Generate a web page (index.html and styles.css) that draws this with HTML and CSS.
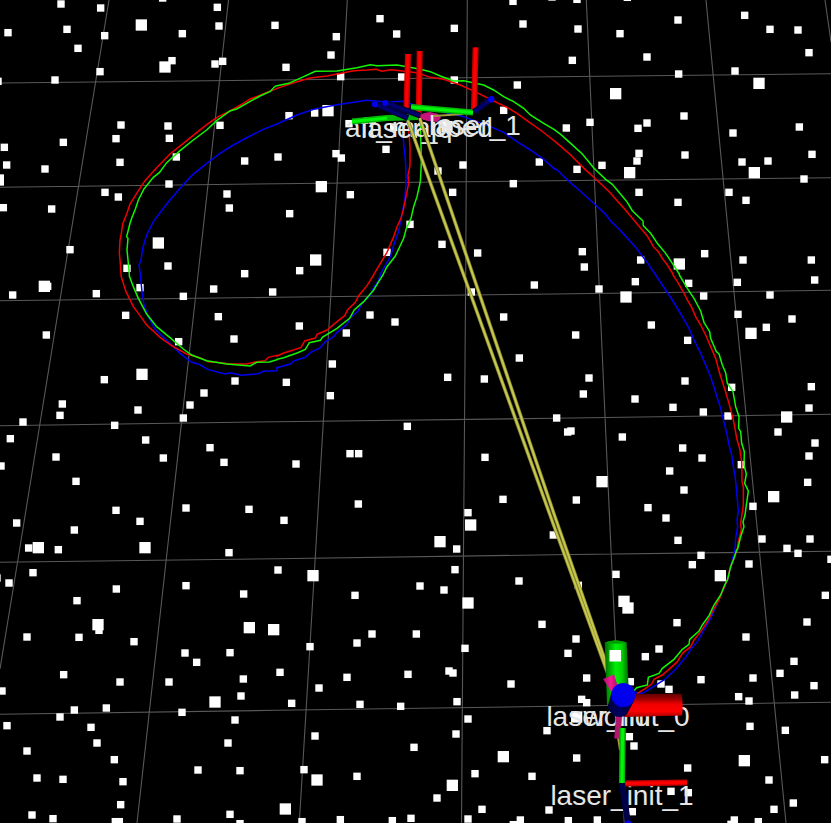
FILE: index.html
```html
<!DOCTYPE html>
<html lang="en">
<head>
<meta charset="utf-8">
<title>Laser mapping view</title>
<link rel="stylesheet" href="styles.css">
</head>
<body>
<main class="view">
<svg class="scene" viewBox="0 0 831 823" role="img" aria-label="Point cloud with trajectories and coordinate frames">
  <defs>
    <linearGradient id="greenTube"><stop offset="0" stop-color="#006400"/><stop offset=".15" stop-color="#009a00"/><stop offset=".45" stop-color="#00ee08"/><stop offset=".7" stop-color="#00d800"/><stop offset=".88" stop-color="#009000"/><stop offset="1" stop-color="#005c00"/></linearGradient>
    <linearGradient id="redTube" x2="0" y2="1"><stop offset="0" stop-color="#600000"/><stop offset=".22" stop-color="#9a0000"/><stop offset=".45" stop-color="#f00000"/><stop offset=".75" stop-color="#ff0000"/><stop offset="1" stop-color="#a80000"/></linearGradient>
    <linearGradient id="navyTube"><stop offset="0" stop-color="#000038"/><stop offset=".45" stop-color="#000060"/><stop offset="1" stop-color="#000030"/></linearGradient>
    <linearGradient id="pinkCone"><stop offset="0" stop-color="#a80e62"/><stop offset=".5" stop-color="#f01c92"/><stop offset="1" stop-color="#b01068"/></linearGradient>
  </defs>
  <path class="grid" d="M0 83 277 80 554 76.7 831 73.7M0 187.3 277 183.7 554 180.7 831 177.7M0 300.7 277 297.3 554 294 831 290.3M0 425.7 277 421.7 554 418.3 831 414.3M0 562.3 277 558.7 554 554.8 831 551.3M0 714.3 277 710.3 554 706.3 831 702.3M109 0 64 275 19.5 550 0 669M228.5 0 198 275 167.3 550 137 823M347.3 0 332 275 315.7 550 299.3 823M467.3 0 465.7 275 463.5 550 461.5 823M586.3 0 598.7 275 611 550 624.3 823M706 0 732.3 275 759.3 550 786 823M825 0 831 42"/>
  <g id="cloud"></g>
  <g id="tracks"></g>
  <g class="axis">
    <path class="cone" d="M420 116Q421 113 430 112L438 114 441 118 437 122 428 121Q421 120 420 116z"/>
  </g>
  <g class="label">
    <text x="419" y="137">aft_mapped</text>
    <text x="407" y="138">laser_0</text>
    <text x="475" y="135">laser_1</text>
    <text x="618" y="726">laser_init_0</text>
    <text x="617" y="726">world</text>
    <text x="622" y="805">laser_init_1</text>
  </g>
  <g class="link">
    <path d="M407.7 120 463.7 275 554 526 609 677M419.7 118 473 275 554 514 611 677"/>
    <path class="core" d="M407.7 120 463.7 275 554 526 609 677M419.7 118 473 275 554 514 611 677"/>
    <path class="faint" d="M618 737 620 750M434 116 463 114"/>
  </g>
  <g class="axis">
    <path class="red edge" d="M408 54 406.5 108M419.7 51 418.7 115M475.6 47.5 474 110"/>
    <path class="red" d="M408 54 406.5 108M419.7 51 418.7 115M475.6 47.5 474 110"/>
    <path class="green edge" d="M352 121.5 387 118 418 117M411 107 473 112.5"/>
    <path class="green" d="M352 121.5 387 118M411 107 473 112.5"/>
    <path class="navy edge" d="M375 104 408 118M386 103 420 115.5M490 100 474 112"/>
    <path class="navy" d="M375 104 408 118M386 103 420 115.5M490 100 474 112"/>
    <g class="tip"><circle cx="374.8" cy="104.3" r="3"/><circle cx="385.3" cy="103" r="3"/><circle cx="491.3" cy="99.3" r="3.2"/></g>
  </g>
  <g class="axis">
    <path class="cone lower" d="M616 716h6l-2.300 22.500-5.500 0z"/>
    <path fill="url(#greenTube)" d="M604.7 642.500Q615.700 638.500 626.700 642.500L629 698 607 705z"/>
    <path fill="#009c00" d="M604.7 642.500Q615.700 638.500 626.700 642.500Q615.700 645 604.700 642.500z"/>
    <path fill="url(#redTube)" d="M627 694 681.500 693.700Q683.500 705 682 715.500L624 717z"/>
    <path fill="url(#pinkCone)" d="M603 679 614 674.500 618 687 611.500 692z"/>
    <path fill="url(#navyTube)" d="M611.5 692 607.500 707Q611 717 620 717Q625 717 627 714L634 701z"/>
    <circle class="ball" cx="623.3" cy="695" r="12"/>
    <rect class="point" x="609.500" y="650" width="11.500" height="11.500"/>
    <path class="green edge" d="M622.7 728 622 783"/>
    <path class="green" d="M622.7 728 622 783"/>
    <path class="red edge" d="M625 783.500 687 782.500"/>
    <path class="red" d="M625 783.500 687 782.500"/>
    <path class="navy edge deep" d="M622 783.500 628 823"/>
    <path class="navy deep" d="M622 783.500 628 823"/>
    <circle class="ball" cx="628" cy="824" r="3.500"/>
  </g>
</svg>
</main>
<script src="scene.js"></script>
</body>
</html>
```
FILE: styles.css
```css
html,
body {
  margin: 0;
  background: #000;
}

.view {
  width: 100%;
  overflow: hidden;
}

.scene {
  display: block;
  width: 100%;
  height: auto;
  background: #000;
}

.grid {
  fill: none;
  stroke: #585858;
  stroke-width: 1.1;
}

.point {
  fill: #fff;
}

.track {
  fill: none;
  stroke-width: 1.5;
}

.track-red { stroke: #f00000; }
.track-green { stroke: #14f500; }
.track-blue { stroke: #0000f0; }

.label {
  fill: #e6e6e6;
  font-family: "Liberation Sans", Arial, sans-serif;
  font-size: 28px;
  text-anchor: middle;
}

.link path {
  fill: none;
  stroke: #85852f;
  stroke-width: 3.6;
}

.link .core {
  stroke: #c8c84e;
  stroke-width: 2;
}

.link .faint {
  stroke: #a09a3c;
  stroke-width: 2;
}

.red,
.green,
.navy {
  fill: none;
  stroke-width: 3;
}

.edge { stroke-width: 6; }

.red { stroke: #ff0000; }
.red.edge { stroke: #c80000; }
.green { stroke: #00f50a; }
.green.edge { stroke: #00b800; }
.navy { stroke: #000070; }
.navy.edge { stroke: #00003c; }
.navy.deep { stroke: #000048; }

.tip,
.ball {
  fill: #0000ee;
}

.cone { fill: #c8147a; }
.cone.lower { fill: #b0186c; }
```
FILE: scene.js
```js
// The view is split in a 3 x 3 set of sectors; values are thirds of a unit
// measured from the sector's own corner.
const corner = s => [277 * (s % 3), 275 * Math.floor(s / 3)];

function place(sector, list) {
  const [ox, oy] = corner(sector);
  return list.trim().split(/\s+/).map(pair => {
    const [x, y] = pair.split(',').map(Number);
    return [ox + x / 3, oy + y / 3];
  });
}

function add(parent, name, attributes) {
  const node = document.createElementNS('http://www.w3.org/2000/svg', name);
  for (const key in attributes) node.setAttribute(key, attributes[key]);
  document.getElementById(parent).appendChild(node);
}

const small = [
  '183,12 302,24 24,98 201,88 234,145 314,107 547,101 488,-6 652,22 657,78 825,76 516,182 645,192 668,184 300,215 165,240 -6,244 363,375 348,416 504,378 508,415 660,376 529,471 734,483 13,442 190,427 360,487 20,495 135,507 507,552 315,577 355,591 10,623 155,627 681,582 688,624 210,749 504,798 381,805 734,821',
  '309,56 178,110 359,102 162,165 27,202 191,230 374,231 532,85 708,4 738,72 532,240 721,255 680,331 36,347 113,339 3,471 177,461 193,474 327,448 350,382 216,371 558,495 483,513 787,486 709,551 527,577 220,584 38,641 399,673 495,733 330,757 602,759 68,812 825,-9',
  '69,-2 220,-8 372,60 572,46 72,87 198,101 55,181 279,171 648,88 732,90 765,158 543,213 374,222 108,367 37,384 252,385 279,369 390,348 537,399 736,381 255,460 249,483 144,496 69,508 393,465 564,486 642,483 774,463 750,537 255,577 372,607 525,577 576,601 85,755 91,801 260,780 452,761 567,780 772,780',
  '38,60 289,56 420,38 377,121 139,180 143,34 550,64 641,42 655,125 702,192 536,200 818,51 313,314 187,387 180,421 69,441 344,451 414,405 31,491 437,495 168,546 228,619 3,573 490,549 550,429 570,390 612,354 705,318 630,518 672,562 558,699 747,703 348,706 420,739 50,744 223,765 86,819 175,824 687,833',
  '772,30 583,51 279,120 354,141 67,153 208,174 680,126 727,249 166,267 28,322 160,362 512,307 622,312 391,454 219,536 245,536 57,567 624,547 678,673 244,687 21,736 573,713 829,780 539,822',
  '244,20 135,42 404,25 449,63 550,22 552,118 648,60 782,15 292,150 65,180 401,196 637,157 714,132 105,309 88,357 243,372 393,318 357,397 448,411 533,337 772,335 765,399 522,423 8,429 41,471 51,468 205,486 386,519 444,549 347,588 390,645 67,675 282,698 336,729 372,796 672,471 783,504 765,543 761,622 562,569 597,694 624,792 768,792 699,820',
  '99,68 27,99 -9,84 349,117 231,152 558,107 731,132 834,60 297,241 81,261 237,262 402,275 555,309 590,337 690,308 191,374 360,396 507,396 730,387 723,438 6,423 223,480 319,474 180,501 546,487 21,527 273,532 705,510 291,579 684,579 81,603 343,629 594,660 720,662 111,684 189,688 369,695 362,764 96,795 159,806 531,807 690,793 720,821 346,815 358,815',
  '534,59 429,108 501,120 234,136 726,93 795,223 285,252 418,252 240,279 99,290 564,295 393,373 210,382 516,363 528,369 126,414 9,367 702,402 44,460 249,463 371,469 540,455 573,507 114,558 537,552 411,592 81,659 240,679 594,671 765,679 480,744 615,778 816,780 810,542 573,807 402,805 346,812 190,809 75,815 730,810 709,824',
  '441,16 415,44 732,10 585,42 831,28 186,73 73,106 814,136 369,218 759,216 66,267 576,261 42,310 315,297 274,320 720,334 678,370 98,384 597,384 780,407 441,389 229,395 321,402 345,418 83,448 98,458 554,440 585,453 722,435 588,529 694,541 226,560 240,588 68,624 401,654 645,690 812,629 351,724 403,728 718,759 660,778 235,785 43,812 130,810 541,810 531,823 613,815'
];

const large = [
  '424,75 495,201 -5,540 475,729',
  '153,332 133,560 116,780 510,380',
  '185,281 615,250 227,518 601,518 376,792',
  '133,34 426,298 115,818 435,818',
  '581,750 489,800',
  '216,66 591,175 144,620 698,426 659,665',
  '294,224 748,233 821,239 645,456',
  '108,77 573,159 679,620 120,690 526,706 25,777',
  '499,77 210,154 222,174 571,632 68,501'
];

function scatter(groups, size) {
  groups.forEach((list, sector) => {
    for (const [x, y] of place(sector, list)) {
      add('cloud', 'rect', { class: 'point', x: x - size / 2, y: y - size / 2, width: size, height: size });
    }
  });
}
scatter(small, 7.4);
scatter(large, 11.3);

const tracks = {
  blue: [
    [8, '245,428 265,430 290,415 330,390 365,358 395,322 410,298 430,275 450,240 470,205 485,170 500,135 510,115 520,90 530,50 537,20 543,0'],
    [5, '543,820 545,790 551,755 549,735 553,708 548,650 543,600 537,570 533,540 525,510 520,483 507,430 500,400 488,362 470,305 455,270 440,235 420,195 405,160 385,125 355,75 325,30 305,0'],
    [2, '303,822 280,788 245,742 225,720 200,692 170,663 155,643 125,615 105,597 75,570 55,553 25,525 10,510 0,505'],
    [1, '831,506 800,478 760,450 720,425 680,397 640,380 600,365 560,350 540,345 470,330 405,313 380,304 330,306 270,301 240,305 180,314 110,328 60,345 0,372'],
    [0, '831,372 790,388 750,408 700,435 660,460 620,490 575,527 540,565 500,612 460,665 440,705 428,745 423,780 417,795 421,822'],
    [3, '421,0 426,50 432,90 445,125 465,162 490,187 520,215 540,235 575,262 595,267 625,284 675,297 690,293 725,301 775,296 790,289 831,287'],
    [4, '0,278 40,267 50,258 85,247 100,233 130,218 145,200 170,185 180,172 210,148 220,128 243,108 255,85 280,60 290,38 305,15 310,0'],
    [1, '310,822 340,770 352,730 365,695 375,640 383,600 387,550 386,490 381,440 376,390']
  ],
  red: [
    [8, '250,430 270,418 293,402 300,388 325,375 345,358 370,335 385,310 410,290 420,270 440,245 460,215 478,180 497,145 505,125 520,90 528,55 540,25 549,0'],
    [5, '550,822 553,800 562,765 560,745 568,690 568,635 564,620 563,560 557,520 548,490 543,460 537,430 525,385 513,345 505,320 497,295 485,250 470,215 455,180 440,150 425,125 413,97 400,75 385,45 370,20 357,0'],
    [2, '357,822 340,795 325,775 313,755 298,740 280,708 260,685 235,655 210,625 190,603 170,580 150,560 125,537 90,505 50,465 25,443 0,422'],
    [1, '825,417 790,390 750,362 720,340 690,322 650,303 600,278 550,255 500,238 460,232 420,218 370,212 340,209 315,214 297,208 270,210 230,212 200,218 150,228 100,234 50,248 0,265'],
    [0, '825,268 800,277 775,288 750,297 730,310 690,333 655,350 625,370 590,398 550,430 510,462 470,503 435,542 410,580 390,612 380,642 368,672 364,700 360,720 358,760 361,790 363,822'],
    [3, '363,3 378,50 400,95 420,122 440,150 480,187 515,212 560,237 600,248 625,260 650,262 690,267 740,267 765,261 795,257 805,247 831,241'],
    [4, '0,243 20,234 50,225 72,217 83,198 115,189 120,178 150,165 180,140 203,122 212,104 235,82 245,62 270,32 290,0'],
    [1, '290,824 310,790 330,757 350,710 360,680 372,655 380,625 387,590 395,550 393,525 399,497 399,440 396,400 390,355']
  ],
  green: [
    [8, '240,422 248,413 280,405 283,382 315,370 325,355 360,328 385,298 405,283 407,268 435,243 445,225 465,197 480,165 500,135 512,105 521,88 530,50 540,25 548,0'],
    [5, '551,822 560,785 570,755 567,740 573,720 577,690 583,648 572,625 577,597 570,570 571,530 563,505 560,470 554,460 555,425 545,395 537,350 520,325 515,293 505,270 495,237 487,230 470,190 467,170 450,142 440,108 420,70 400,40 376,0'],
    [2, '376,822 355,790 335,760 310,730 290,700 268,677 267,663 235,632 220,607 200,583 175,553 155,538 120,505 85,462 50,430 20,403 0,388'],
    [1, '831,388 800,370 760,345 740,325 710,305 680,290 650,270 620,255 595,250 560,242 530,243 490,228 460,215 430,208 390,200 360,195 300,197 280,194 240,203 180,213 115,214 75,232 35,250 0,257'],
    [0, '825,259 810,275 780,288 740,310 710,327 690,333 650,362 620,390 580,420 540,452 500,488 478,518 460,532 432,567 415,600 407,625 395,655 390,670 380,710 384,715 381,750 386,800 388,822'],
    [3, '388,3 400,35 415,70 440,117 470,155 510,188 550,222 575,240 620,257 680,267 750,273 770,262 808,261 831,254'],
    [4, '0,253 20,248 60,234 85,223 97,203 130,196 137,186 180,160 218,130 232,104 260,80 290,45 305,20 318,0'],
    [1, '318,824 330,800 355,768 380,715 388,685 402,655 410,620 420,590 430,545 433,490 432,440 430,370']
  ]
};

for (const name in tracks) {
  const points = tracks[name].flatMap(([sector, list]) => place(sector, list));
  add('tracks', 'polyline', { class: 'track track-' + name, points: points.map(p => p.join()).join(' ') });
}
```
